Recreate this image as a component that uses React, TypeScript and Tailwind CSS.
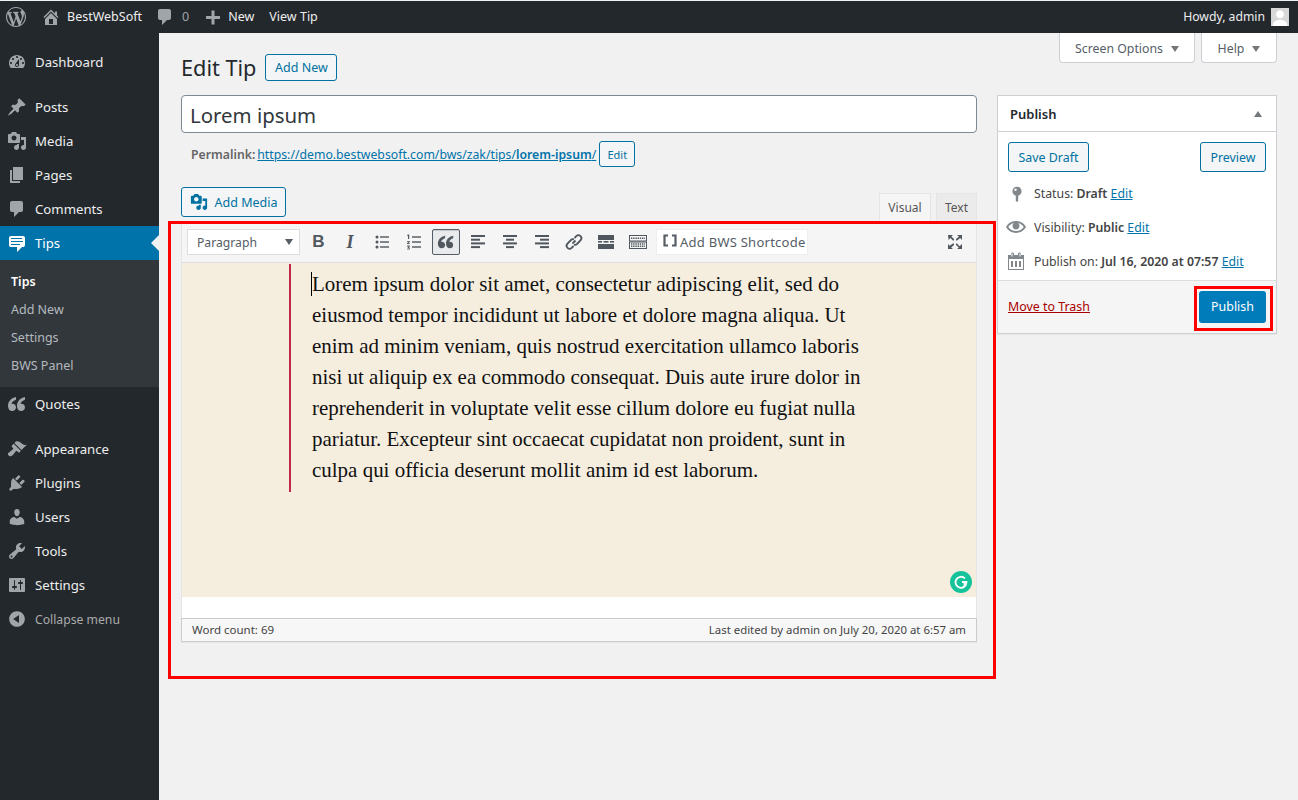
import React from "react";

const Q = "c-5 1-8 4.5-8 9 0 3 1.7 5 4.2 5 2.2 0 3.8-1.5 3.8-3.7 0-2.1-1.5-3.6-3.5-3.6-.4 0-.8.1-1 .2.3-1.9 2.2-3.5 4.5-4.2z";

const P = {
  wp: "M20 10c0-5.51-4.49-10-10-10C4.48 0 0 4.49 0 10c0 5.52 4.48 10 10 10 5.51 0 10-4.48 10-10zM7.78 15.37L4.37 6.22c.55-.02 1.17-.08 1.17-.08.5-.06.44-1.13-.06-1.11 0 0-1.45.11-2.37.11-.18 0-.37 0-.58-.01C4.12 2.69 6.87 1.11 10 1.11c2.33 0 4.45.87 6.05 2.34-.68-.11-1.65.39-1.65 1.58 0 .74.45 1.36.9 2.1.35.61.55 1.36.55 2.46 0 1.49-1.4 5-1.4 5l-3.03-8.37c.54-.02.82-.17.82-.17.5-.05.44-1.25-.06-1.22 0 0-1.44.12-2.38.12-.87 0-2.33-.12-2.33-.12-.5-.03-.56 1.2-.06 1.22l.92.08 1.26 3.41zM17.41 10c.24-.64.74-1.87.43-4.25.7 1.29 1.05 2.71 1.05 4.25 0 3.29-1.73 6.24-4.4 7.78.97-2.59 1.94-5.2 2.92-7.78zM6.1 18.09C3.12 16.65 1.11 13.53 1.11 10c0-1.3.23-2.48.72-3.59C3.25 10.3 4.67 14.2 6.1 18.09zm4.03-6.63l2.58 6.98c-.86.29-1.76.45-2.71.45-.79 0-1.57-.11-2.29-.33.81-2.38 1.62-4.74 2.42-7.1z",
  home: "M16 8.5l1.53 1.53-1.06 1.06L10 4.62l-6.47 6.47-1.06-1.06L10 2.5l4 4v-2h2v4zm-6-2.46l6 5.99V18H4v-5.97zM12 17v-5H8v5h4z",
  plus: "M17 9v3h-5.5v5.5h-3V12H3V9h5.5V3.5h3V9H17z",
  dashboard: "M3.76 16h12.48c1.1-1.37 1.76-3.11 1.76-5 0-4.42-3.58-8-8-8s-8 3.58-8 8c0 1.89.66 3.63 1.76 5zM10 4c.55 0 1 .45 1 1s-.45 1-1 1-1-.45-1-1 .45-1 1-1zM6 6c.55 0 1 .45 1 1s-.45 1-1 1-1-.45-1-1 .45-1 1-1zm8 0c.55 0 1 .45 1 1s-.45 1-1 1-1-.45-1-1 .45-1 1-1zm-5.37 5.55L12 7v6c0 1.1-.9 2-2 2s-2-.9-2-2c0-.57.24-1.08.63-1.45zM4 10c.55 0 1 .45 1 1s-.45 1-1 1-1-.45-1-1 .45-1 1-1zm12 0c.55 0 1 .45 1 1s-.45 1-1 1-1-.45-1-1 .45-1 1-1zm-5 3c0-.55-.45-1-1-1s-1 .45-1 1 .45 1 1 1 1-.45 1-1z",
  post: "M10.44 3.02l1.82-1.82 6.36 6.35-1.83 1.82c-1.05-.68-2.48-.57-3.41.36l-.75.75c-.92.93-1.04 2.35-.35 3.41l-1.83 1.82-2.41-2.41-2.8 2.79c-.42.42-3.38 2.71-3.8 2.29s1.86-3.39 2.28-3.81l2.79-2.79L4.1 9.36l1.83-1.82c1.05.69 2.48.57 3.4-.36l.75-.75c.93-.92 1.05-2.35.36-3.41z",
  media: "M13 11V4c0-.55-.45-1-1-1h-1.67L9 1H5L3.67 3H2c-.55 0-1 .45-1 1v7c0 .55.45 1 1 1h10c.55 0 1-.45 1-1zM7 4.5c1.38 0 2.5 1.12 2.5 2.5S8.38 9.5 7 9.5 4.5 8.38 4.5 7 5.62 4.5 7 4.5zM14 6h5v10.5c0 1.38-1.12 2.5-2.5 2.5S14 17.88 14 16.5s1.12-2.5 2.5-2.5c.17 0 .34.02.5.05V9h-3V6zm-4 8.05V13h2v3.5c0 1.38-1.12 2.5-2.5 2.5S7 17.88 7 16.5 8.12 14 9.5 14c.17 0 .34.02.5.05z",
  page: "M6 15V2h10v13H6zm-1 1h8v2H3V5h2v11z",
  comment: "M5 2h9c1.1 0 2 .9 2 2v7c0 1.1-.9 2-2 2h-2l-5 5v-5H5c-1.1 0-2-.9-2-2V4c0-1.1.9-2 2-2z",
  tips: "M4 3h12c.55 0 1.02.2 1.41.59S18 4.45 18 5v7c0 .55-.2 1.02-.59 1.41S16.55 14 16 14h-1l-5 5v-5H4c-.55 0-1.02-.2-1.41-.59S2 12.55 2 12V5c0-.55.2-1.02.59-1.41S3.45 3 4 3zm11 2H4v1h11V5zm1 3H4v1h12V8zm-3 3H4v1h9v-1z",
  quote: `M9 3${Q}M18 3${Q}`,
  appearance: "M14.48 11.06L7.41 3.99l1.5-1.5c.5-.56 2.3-.47 3.51.32 1.21.8 1.43 1.28 2.91 2.1 1.18.64 2.45 1.26 4.45.85zm-.71.71L6.7 4.7 4.93 6.47c-.39.39-.39 1.02 0 1.41l1.06 1.06c.39.39.39 1.03 0 1.42-.6.6-1.43 1.11-2.21 1.69-.35.26-.7.53-1.01.84C1.43 13.23.7 14.4 1.04 15.62c.1.38.29.72.57 1 .28.28.62.47 1 .57 1.22.34 2.39-.39 3.73-1.73.31-.31.58-.66.84-1.01.58-.78 1.09-1.61 1.69-2.21.39-.39 1.03-.39 1.42 0l1.06 1.06c.39.39 1.02.39 1.41 0z",
  plugin: "M13.11 4.36L9.87 7.6 8 5.73l3.24-3.24c.35-.34 1.05-.2 1.56.32.52.51.66 1.21.31 1.55zm-8 1.77l.91-1.12 9.01 9.01-1.19.84c-.71.71-2.63 1.16-3.82 1.16H6.14L4.9 17.26c-.59.59-1.54.59-2.12 0-.59-.58-.59-1.53 0-2.12l1.24-1.24v-3.88c0-1.13.4-3.19 1.09-3.89zm7.26 3.97l3.24-3.24c.34-.35 1.04-.2 1.55.31.52.52.66 1.22.32 1.57l-3.24 3.24z",
  users: "M10 9.25c-2.27 0-2.73-3.44-2.73-3.44C7 4.02 7.82 2 9.97 2c2.16 0 2.98 2.02 2.71 3.81 0 0-.41 3.44-2.68 3.44zm0 2.57L12.72 10c2.39 0 4.52 2.33 4.52 4.53v2.49s-3.65 1.13-7.24 1.13c-3.65 0-7.24-1.13-7.24-1.13v-2.49c0-2.25 1.94-4.48 4.47-4.48z",
  tools: "M16.68 9.77c-1.34 1.34-3.3 1.67-4.95.99l-5.41 6.52c-.99.99-2.59.99-3.58 0s-.99-2.59 0-3.57l6.52-5.42c-.68-1.65-.35-3.61.99-4.95 1.28-1.28 3.12-1.62 4.72-1.06l-2.89 2.89 2.82 2.82 2.86-2.87c.53 1.58.18 3.39-1.08 4.65zM3.81 16.21c.4.39 1.04.39 1.43 0 .4-.4.4-1.04 0-1.43-.39-.4-1.03-.4-1.43 0-.39.39-.39 1.03 0 1.43z",
  settings: "M18 16V4c0-.55-.45-1-1-1H3c-.55 0-1 .45-1 1v12c0 .55.45 1 1 1h14c.55 0 1-.45 1-1zM8 11h1c.55 0 1 .45 1 1s-.45 1-1 1H8v1.5c0 .28-.22.5-.5.5s-.5-.22-.5-.5V13H6c-.55 0-1-.45-1-1s.45-1 1-1h1V5.5c0-.28.22-.5.5-.5s.5.22.5.5V11zm5-2h-1c-.55 0-1-.45-1-1s.45-1 1-1h1V5.5c0-.28.22-.5.5-.5s.5.22.5.5V7h1c.55 0 1 .45 1 1s-.45 1-1 1h-1v5.5c0 .28-.22.5-.5.5s-.5-.22-.5-.5V9z",
  collapse: "M10 2.16c4.33 0 7.84 3.51 7.84 7.84s-3.51 7.84-7.84 7.84S2.16 14.33 2.16 10 5.71 2.16 10 2.16zm2 11.72V6.12L6.18 9.97z",
  pin: "M11 3.8a4.5 4.5 0 0 1 1.2 8.84V18l-1.2 1-1.2-1v-5.36A4.5 4.5 0 0 1 11 3.8zM9.5 5.5a1.2 1.2 0 1 0 0 2.4 1.2 1.2 0 0 0 0-2.4z",
  eye: "M19.7 9.4C17.7 6 14.1 4 10 4 5.9 4 2.3 6 .3 9.4L0 10l.3.6c2 3.4 5.6 5.4 9.7 5.4 4.1 0 7.7-2 9.7-5.4l.3-.6-.3-.6zM10 14.1c-3.1 0-6-1.6-7.7-4.1C3.6 8 5.7 6.6 8 6.1c-.9.6-1.5 1.7-1.5 2.9 0 1.9 1.6 3.5 3.5 3.5s3.5-1.6 3.5-3.5c0-1.2-.6-2.3-1.5-2.9 2.3.5 4.4 1.9 5.7 3.9-1.7 2.5-4.6 4.1-7.7 4.1z",
  calendar: "M15 4h3v15H2V4h3V3c0-.41.15-.76.44-1.06.29-.29.65-.44 1.06-.44s.77.15 1.06.44c.29.3.44.65.44 1.06v1h4V3c0-.41.15-.76.44-1.06.29-.29.65-.44 1.06-.44s.77.15 1.06.44c.29.3.44.65.44 1.06v1zM6 5.5c.41 0 .5-.09.5-.5V3c0-.41-.09-.5-.5-.5s-.5.09-.5.5v2c0 .41.09.5.5.5zm8 0c.41 0 .5-.09.5-.5V3c0-.41-.09-.5-.5-.5s-.5.09-.5.5v2c0 .41.09.5.5.5zM17 18V8H3v10h14zM5 10h2v6H5zm4 0h2v6H9zm4 0h2v6h-2z",
};

function Icon({ d, className }: { d: string; className: string }) {
  return (
    <svg viewBox="0 0 20 20" className={className} fill="currentColor" fillRule="evenodd" aria-hidden="true">
      <path d={d} />
    </svg>
  );
}

function MenuItem({ icon, label, mt }: { icon: string; label: string; mt?: string }) {
  return (
    <div className={`flex items-center h-[34px] pl-[7px] ${mt ?? ""}`}>
      <Icon d={icon} className="w-[20px] h-[20px] text-[#a0a5aa] shrink-0" />
      <span className="ml-[8px] pt-[2px] text-[13.2px] text-[#eeeeee]">{label}</span>
    </div>
  );
}

function Sidebar() {
  return (
    <aside className="w-[159px] shrink-0 bg-[#23282d] pt-[12px]">
      <MenuItem icon={P.dashboard} label="Dashboard" />
      <MenuItem icon={P.post} label="Posts" mt="mt-[11px]" />
      <MenuItem icon={P.media} label="Media" />
      <MenuItem icon={P.page} label="Pages" />
      <MenuItem icon={P.comment} label="Comments" />
      <div className="relative flex items-center h-[34px] pl-[7px] bg-[#0073aa]">
        <Icon d={P.tips} className="w-[20px] h-[20px] text-white shrink-0" />
        <span className="ml-[8px] pt-[2px] text-[13.2px] text-white">Tips</span>
        <span className="absolute right-0 top-[9px] w-0 h-0 border-y-[8px] border-y-transparent border-r-[8px] border-r-[#f1f1f1]" />
      </div>
      <div className="bg-[#32373c] pt-[8px] pb-[7px] text-[12.5px]">
        <div className="h-[28px] pl-[11px] flex items-center font-semibold text-white">Tips</div>
        <div className="h-[28px] pl-[11px] flex items-center text-[#b4b9be]">Add New</div>
        <div className="h-[28px] pl-[11px] flex items-center text-[#b4b9be]">Settings</div>
        <div className="h-[28px] pl-[11px] flex items-center text-[#b4b9be]">BWS Panel</div>
      </div>
      <MenuItem icon={P.quote} label="Quotes" />
      <MenuItem icon={P.appearance} label="Appearance" mt="mt-[11px]" />
      <MenuItem icon={P.plugin} label="Plugins" />
      <MenuItem icon={P.users} label="Users" />
      <MenuItem icon={P.tools} label="Tools" />
      <MenuItem icon={P.settings} label="Settings" />
      <div className="flex items-center h-[34px] pl-[7px]">
        <Icon d={P.collapse} className="w-[20px] h-[20px] text-[#a0a5aa] shrink-0" />
        <span className="ml-[8px] pt-[2px] text-[12.2px] text-[#aaaaaa]">Collapse menu</span>
      </div>
    </aside>
  );
}

function TopBar() {
  return (
    <header className="h-[32px] mt-px shrink-0 bg-[#23282d] flex items-center text-[12.5px] text-[#eeeeee]">
      <Icon d={P.wp} className="ml-[6px] w-[20px] h-[20px] text-[#a0a5aa]" />
      <Icon d={P.home} className="ml-[15px] w-[20px] h-[20px] text-[#a0a5aa]" />
      <span className="ml-[6px]">BestWebSoft</span>
      <Icon d={P.comment} className="ml-[13px] w-[20px] h-[20px] text-[#a0a5aa]" />
      <span className="ml-[7px] text-[#a0a5aa]">0</span>
      <Icon d={P.plus} className="ml-[14px] w-[20px] h-[20px] text-[#a0a5aa]" />
      <span className="ml-[5px]">New</span>
      <span className="ml-[15px]">View Tip</span>
      <span className="ml-auto text-[12.2px]">Howdy, admin</span>
      <div className="ml-[6px] mr-[9px] w-[18px] h-[18px] bg-[#d8d8d8] flex items-end justify-center overflow-hidden">
        <svg viewBox="0 0 17 17" className="w-[18px] h-[18px]" fill="#ffffff" aria-hidden="true">
          <circle cx="8.5" cy="6" r="3.6" />
          <path d="M1.5 17c0-4 3-6 7-6s7 2 7 6z" />
        </svg>
      </div>
    </header>
  );
}

function OutlineBtn({ children, className }: { children: React.ReactNode; className: string }) {
  return (
    <div className={`flex items-center justify-center pt-[2px] border border-[#0071a1] bg-[#f3f5f6] rounded-[3px] text-[#0071a1] ${className}`}>
      {children}
    </div>
  );
}

function ToolBtn({ children, active }: { children: React.ReactNode; active?: boolean }) {
  return (
    <div className={`w-[28px] h-[26px] mr-[4px] flex items-center justify-center text-[#50575e] rounded-[2px] ${active ? "bg-[#e8eaeb] border border-[#555d66] shadow-[inset_0_1px_1px_rgba(0,0,0,0.15)]" : ""}`}>
      {children}
    </div>
  );
}

function Lines({ kind }: { kind: "left" | "center" | "right" }) {
  const xs =
    kind === "left"
      ? [[3, 14], [3, 9], [3, 14], [3, 9]]
      : kind === "center"
        ? [[3, 14], [6, 8], [3, 14], [6, 8]]
        : [[3, 14], [8, 9], [3, 14], [8, 9]];
  return (
    <svg viewBox="0 0 20 20" className="w-[20px] h-[20px]" fill="currentColor" aria-hidden="true">
      {xs.map(([x, w], i) => (
        <rect key={i} x={x} y={3 + i * 3.7} width={w} height="2" />
      ))}
    </svg>
  );
}

function Toolbar() {
  return (
    <div className="h-[41px] bg-[#f5f5f5] border-b border-[#dddddd] flex items-center pl-[5px] pr-[11px]">
      <div className="w-[113px] h-[26px] bg-white border border-[#dddddd] flex items-center justify-between pl-[9px] pr-[5px] text-[12.2px] text-[#555d66]">
        <span className="pt-[2px]">Paragraph</span>
        <span className="w-0 h-0 border-x-[4px] border-x-transparent border-t-[6px] border-t-[#555d66] mr-[1px]" />
      </div>
      <div className="w-[4px]" />
      <ToolBtn><span className="font-['Liberation_Sans',sans-serif] font-bold text-[17px] pl-[1px]">B</span></ToolBtn>
      <ToolBtn><span className="font-['Liberation_Serif',serif] font-bold italic text-[18px]">I</span></ToolBtn>
      <ToolBtn>
        <svg viewBox="0 0 20 20" className="w-[20px] h-[20px]" fill="currentColor" aria-hidden="true">
          <circle cx="5" cy="5" r="1.5" /><circle cx="5" cy="10" r="1.5" /><circle cx="5" cy="15" r="1.5" />
          <rect x="8" y="4.3" width="9" height="1.4" /><rect x="8" y="9.3" width="9" height="1.4" /><rect x="8" y="14.3" width="9" height="1.4" />
        </svg>
      </ToolBtn>
      <ToolBtn>
        <svg viewBox="0 0 20 20" className="w-[20px] h-[20px]" fill="currentColor" aria-hidden="true">
          <path d="M4 2.5h1.2V7H4V3.6l-.9.4v-.9zM3 9h2.8v.9L4.2 11.2h1.7v.8H3v-.8l1.7-1.5H3zM3 13.6h2.8v.8l-1 .9c.7.1 1.1.5 1.1 1.1 0 .8-.7 1.2-1.6 1.2-.5 0-.9-.1-1.3-.3v-.7c.8.3 1.9.3 1.9-.2 0-.4-.6-.5-1.2-.5v-.6l1-.9H3z" />
          <rect x="8" y="4.3" width="9" height="1.4" /><rect x="8" y="9.3" width="9" height="1.4" /><rect x="8" y="14.3" width="9" height="1.4" />
        </svg>
      </ToolBtn>
      <ToolBtn active>
        <svg viewBox="0 0 20 20" className="w-[18px] h-[18px]" fill="currentColor" aria-hidden="true"><path d={P.quote} /></svg>
      </ToolBtn>
      <ToolBtn><Lines kind="left" /></ToolBtn>
      <ToolBtn><Lines kind="center" /></ToolBtn>
      <ToolBtn><Lines kind="right" /></ToolBtn>
      <ToolBtn>
        <svg viewBox="0 0 20 20" className="w-[20px] h-[20px]" fill="none" stroke="currentColor" strokeWidth="1.8" aria-hidden="true">
          <path d="M8.5 11.5l3-3" />
          <path d="M10.5 6l1.8-1.8a3 3 0 0 1 4.2 0a3 3 0 0 1 0 4.2L13 12a3 3 0 0 1-3 .6" />
          <path d="M9.5 14l-1.8 1.8a3 3 0 0 1-4.2 0 3 3 0 0 1 0-4.2L7 8a3 3 0 0 1 3-.6" />
        </svg>
      </ToolBtn>
      <ToolBtn>
        <svg viewBox="0 0 20 20" className="w-[20px] h-[20px]" fill="currentColor" aria-hidden="true">
          <rect x="2" y="3" width="16" height="5" /><rect x="2" y="9" width="4" height="1.6" /><rect x="7.5" y="9" width="5" height="1.6" /><rect x="14" y="9" width="4" height="1.6" /><rect x="2" y="12" width="16" height="5" />
        </svg>
      </ToolBtn>
      <ToolBtn>
        <svg viewBox="0 0 20 20" className="w-[20px] h-[20px]" fill="none" stroke="currentColor" strokeWidth="1" aria-hidden="true">
          <rect x="1.5" y="3.5" width="17" height="5.5" /><rect x="1.5" y="10" width="17" height="6.5" />
          <path d="M3 6.2h14M3 12h14M3 14.3h14" strokeDasharray="1.4 0.8" strokeWidth="1.4" />
        </svg>
      </ToolBtn>
      <div className="w-[152px] h-[26px] bg-white border border-[#eeeeee] flex items-center pl-[5px] text-[13px] text-[#555d66]">
        <svg viewBox="0 0 16 16" className="w-[16px] h-[16px] -mt-[3px] mr-[2px] shrink-0" fill="none" stroke="currentColor" strokeWidth="2.2" aria-hidden="true">
          <path d="M6 2.5H2.500v10H6M10 2.5h3.500v10H10" />
        </svg>
        <span className="pt-[2px] tracking-[0.25px] whitespace-nowrap">Add BWS Shortcode</span>
      </div>
      <svg viewBox="0 0 20 20" className="ml-auto w-[20px] h-[20px] text-[#50575e]" fill="currentColor" aria-hidden="true">
        <path d="M3 3h5L6.4 4.6l2.6 2.4v1.6H8L5.4 6 3.6 8zM17 3v5l-1.8-2L12 8.600h-1V7l3-2.400L12 3zM3 17v-5l1.6 1.8L8 11.400h1V13l-2.800 2.400L8 17zM17 17h-5l1.800-1.600L11 13v-1.600h1l2.600 2.800L17 12z" />
      </svg>
    </div>
  );
}

function Editor() {
  return (
    <div className="border-x border-[#e5e5e5] bg-white">
      <Toolbar />
      <div className="relative h-[334px] bg-[#f5eedf] pl-[107px] pt-[1px]">
        <div className="border-l-2 border-[#c2284e] w-[572px] pl-[21px] pt-[5px] pb-[6px] font-['Liberation_Serif',serif] text-[20.97px] leading-[31px] text-[#111111]">
          <span className="border-l border-black -ml-px">Lorem ipsum dolor sit amet, consectetur adipiscing elit, sed do eiusmod tempor incididunt ut labore et dolore magna aliqua. Ut enim ad minim veniam, quis nostrud exercitation ullamco laboris nisi ut aliquip ex ea commodo consequat. Duis aute irure dolor in reprehenderit in voluptate velit esse cillum dolore eu fugiat nulla pariatur. Excepteur sint occaecat cupidatat non proident, sunt in culpa qui officia deserunt mollit anim id est laborum.</span>
        </div>
        <div className="absolute right-[4px] bottom-[4px] w-[22px] h-[22px] rounded-full bg-[#15c39a] flex items-center justify-center">
          <svg viewBox="0 0 22 22" className="w-[22px] h-[22px]" fill="none" stroke="#ffffff" strokeWidth="1.8" aria-hidden="true">
            <path d="M15 7.5A5.5 5.500 0 1 0 16.500 11h-4.500" />
            <path d="M14.500 12v3.500" />
          </svg>
        </div>
      </div>
      <div className="h-[21px]" />
    </div>
  );
}

function StatusBar() {
  return (
    <div className="h-[24px] bg-[#f7f7f7] border border-[#cccccc] shadow-[0_1px_1px_rgba(0,0,0,0.04)] flex items-center justify-between px-[10px] text-[11.5px] text-[#444444]">
      <span>Word count: 69</span>
      <span className="text-[11.4px]">Last edited by admin on July 20, 2020 at 6:57 am</span>
    </div>
  );
}

function PublishBox() {
  const link = "text-[#0073aa] underline";
  return (
    <section className="w-[280px] border border-[#ccd0d4] bg-white shadow-[0_1px_1px_rgba(0,0,0,0.04)] text-[12.3px] text-[#444444]">
      <div className="h-[36px] border-b border-[#ccd0d4] flex items-center justify-between pl-[12px] pr-[14px]">
        <span className="pt-[2px] text-[13px] font-semibold text-[#23282d]">Publish</span>
        <span className="w-0 h-0 border-x-[4px] border-x-transparent border-b-[6px] border-b-[#72777c]" />
      </div>
      <div className="flex justify-between px-[10px] pt-[10px]">
        <OutlineBtn className="w-[81px] h-[30px] text-[12.4px]">Save Draft</OutlineBtn>
        <OutlineBtn className="w-[66px] h-[30px] text-[12.4px]">Preview</OutlineBtn>
      </div>
      <div className="mt-[4px] pb-[2px]">
        <div className="h-[34px] flex items-center pl-[8px]">
          <Icon d={P.pin} className="w-[20px] h-[20px] text-[#82878c] shrink-0" />
          <span className="ml-[8px] pt-[2px]">Status: <b className="font-semibold">Draft</b> <span className={link}>Edit</span></span>
        </div>
        <div className="h-[34px] flex items-center pl-[8px]">
          <Icon d={P.eye} className="w-[20px] h-[20px] text-[#82878c] shrink-0" />
          <span className="ml-[8px] pt-[2px]">Visibility: <b className="font-semibold">Public</b> <span className={link}>Edit</span></span>
        </div>
        <div className="h-[34px] flex items-center pl-[8px]">
          <Icon d={P.calendar} className="w-[20px] h-[20px] text-[#82878c] shrink-0" />
          <span className="ml-[8px] pt-[2px] whitespace-nowrap">Publish on: <b className="font-semibold">Jul 16, 2020 at 07:57</b> <span className={link}>Edit</span></span>
        </div>
      </div>
      <div className="h-[53px] bg-[#f5f5f5] border-t border-[#dddddd] flex items-center justify-between pl-[10px] pr-[10px] text-[12.4px]">
        <span className="text-[#aa0000] underline">Move to Trash</span>
        <div className="relative w-[67px] h-[32px] bg-[#007cba] rounded-[3px] flex items-center justify-center text-white">
          Publish
          <span className="absolute -left-[5px] -top-[5px] w-[79px] h-[45px] border-[3px] border-[#ff0000]" />
        </div>
      </div>
    </section>
  );
}

export default function App() {
  return (
    <div className="h-[800px] w-[1298px] overflow-hidden flex flex-col bg-[#f1f1f1] font-['Noto_Sans',sans-serif]">
      <TopBar />
      <div className="flex flex-1 min-h-0">
        <Sidebar />
        <main className="flex-1 min-w-0 pl-[22px] pr-[21px]">
          <div className="flex justify-end">
            <div className="w-[136px] h-[30px] pt-[2px] bg-white border border-t-0 border-[#ccd0d4] rounded-b-[4px] flex items-center justify-center gap-[8px] text-[12.3px] text-[#555d66]">
              <span className="pt-[2px]">Screen Options</span>
              <span className="w-0 h-0 border-x-[4px] border-x-transparent border-t-[6px] border-t-[#72777c]" />
            </div>
            <div className="ml-[6px] w-[76px] h-[30px] pt-[2px] bg-white border border-t-0 border-[#ccd0d4] rounded-b-[4px] flex items-center justify-center gap-[8px] text-[12.3px] text-[#555d66]">
              <span className="pt-[2px]">Help</span>
              <span className="w-0 h-0 border-x-[4px] border-x-transparent border-t-[6px] border-t-[#72777c]" />
            </div>
          </div>
          <div className="flex gap-[20px] -mt-[9px]">
            <div className="w-[796px] shrink-0">
              <div className="flex items-center h-[27px]">
                <h1 className="pt-[2px] text-[21.7px] text-[#23282d]">Edit Tip</h1>
                <OutlineBtn className="ml-[9px] w-[72px] h-[27px] text-[12.5px]">Add New</OutlineBtn>
              </div>
              <div className="mt-[14px] h-[38px] pt-[3px] bg-white border border-[#7e8993] rounded-[4px] flex items-center pl-[8px] text-[20.4px] text-[#32373c]">
                Lorem ipsum
              </div>
              <div className="mt-[8px] h-[26px] pl-[10px] flex items-center text-[12.25px] text-[#666666]">
                <span className="pt-[2px] font-semibold">Permalink:</span>
                <span className="pt-[2px] ml-[2px] text-[#0073aa] underline whitespace-nowrap">https://demo.bestwebsoft.com/bws/zak/tips/<b className="font-semibold">lorem-ipsum</b>/</span>
                <OutlineBtn className="ml-[3px] w-[36px] h-[26px] text-[11px]">Edit</OutlineBtn>
              </div>
              <div className="mt-[20px] flex items-end justify-between h-[35px]">
                <OutlineBtn className="w-[105px] h-[30px] mb-[5px] text-[12.5px] gap-[7px]">
                  <Icon d={P.media} className="w-[18px] h-[18px] -mt-[2px]" />
                  Add Media
                </OutlineBtn>
                <div className="flex gap-[5px] text-[12px]">
                  <div className="w-[52px] h-[29px] bg-[#f5f5f5] border border-b-0 border-[#e5e5e5] flex items-center justify-center text-[#555555]">Visual</div>
                  <div className="w-[41px] h-[29px] bg-[#ebebeb] border border-b-0 border-[#e5e5e5] flex items-center justify-center text-[#555555]">Text</div>
                </div>
              </div>
              <div className="relative">
                <Editor />
                <StatusBar />
                <span className="absolute -left-[13px] -top-[1px] w-[828px] h-[458px] border-[3px] border-[#ff0000]" />
              </div>
            </div>
            <div className="pt-[41px]">
              <PublishBox />
            </div>
          </div>
        </main>
      </div>
    </div>
  );
}
